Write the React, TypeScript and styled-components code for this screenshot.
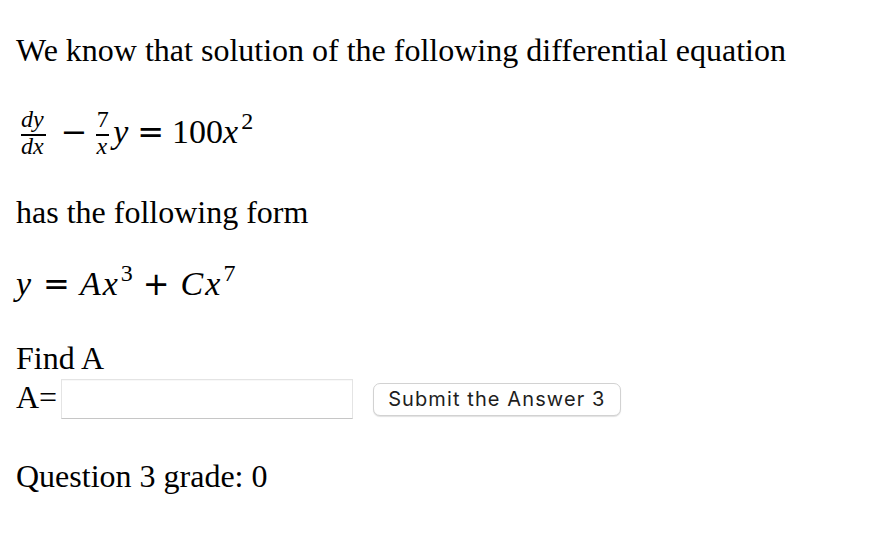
import React from 'react';
import styled, { createGlobalStyle } from 'styled-components';

const GlobalStyle = createGlobalStyle`
  html, body {
    margin: 0;
    background: #ffffff;
  }
  body {
    font-family: "Liberation Serif", "Times New Roman", serif;
    color: #000000;
  }
`;

const Page = styled.div`
  padding: 32px 16px 0;
`;

const Para = styled.p<{ $top: number }>`
  margin: ${props => props.$top}px 0 0;
  font-size: 32px;
  line-height: 36px;
`;

const MathRow = styled.div<{ $top: number }>`
  margin-top: ${props => props.$top}px;
  height: 80px;
  font-family: "Liberation Serif", "Times New Roman", serif;
  font-size: 34px;
  line-height: 80px;
  white-space: nowrap;
`;

const Var = styled.span`
  font-style: italic;
  margin-right: 2px;
`;

const Num = styled.span`
  font-style: normal;
`;

const Op = styled.span<{ $l: number; $r: number }>`
  font-family: "DejaVu Sans", sans-serif;
  font-size: 32px;
  line-height: 1;
  margin: 0 ${props => props.$r}px 0 ${props => props.$l}px;
`;

const Sup = styled.span`
  font-size: 24px;
  line-height: 0;
  vertical-align: 14px;
  margin-left: 1px;
`;

const Frac = styled.span<{ $pad: number; $left?: number; $right?: number }>`
  display: inline-flex;
  flex-direction: column;
  align-items: center;
  vertical-align: 16px;
  font-size: 24px;
  padding: 0 ${props => props.$pad}px;
  margin: 0 ${props => props.$right ?? 0}px 0 ${props => props.$left ?? 0}px;
`;

const FracPart = styled.span`
  line-height: 20px;
  height: 20px;
  white-space: nowrap;
`;

const FracBar = styled.span`
  align-self: stretch;
  height: 2px;
  margin: 5px 0 0;
  background: #000000;
`;

const AnswerRow = styled.div`
  display: flex;
  align-items: center;
  margin-top: 3px;
`;

const Label = styled.span`
  align-self: flex-start;
  font-size: 32px;
  line-height: 36px;
`;

const AnswerInput = styled.input`
  box-sizing: border-box;
  width: 292px;
  height: 40px;
  margin: 0 0 0 4px;
  padding: 0 8px;
  border: 1px solid #e4e4e4;
  border-bottom-color: #c6c6c6;
  border-radius: 0;
  background: #ffffff;
  box-shadow: inset 0 1px 1px rgba(0, 0, 0, 0.03);
  font-size: 20px;
  outline: none;
`;

const SubmitButton = styled.button`
  box-sizing: border-box;
  height: 33px;
  margin-left: 20px;
  padding: 0 14px;
  border: 1px solid #d2d2d2;
  border-radius: 7px;
  background: #ffffff;
  box-shadow: 0 1px 1px rgba(0, 0, 0, 0.12);
  color: #1e1e1e;
  font-family: Inter, "Liberation Sans", sans-serif;
  font-size: 20px;
  letter-spacing: 1.1px;
  white-space: nowrap;
  cursor: pointer;
`;

const App: React.FC = () => {
  return (
    <Page>
      <GlobalStyle />
      <Para $top={0}>We know that solution of the following differential equation</Para>

      <MathRow $top={24}>
        <Frac $pad={3} $left={2}>
          <FracPart><Var>dy</Var></FracPart>
          <FracBar />
          <FracPart><Var>dx</Var></FracPart>
        </Frac>
        <Op $l={12} $r={9}>−</Op>
        <Frac $pad={0} $right={4}>
          <FracPart><Num>7</Num></FracPart>
          <FracBar />
          <FracPart><Var>x</Var></FracPart>
        </Frac>
        <Var>y</Var>
        <Op $l={7} $r={8}>=</Op>
        <Num>100</Num>
        <Var>x</Var>
        <Sup>2</Sup>
      </MathRow>

      <Para $top={22}>has the following form</Para>

      <MathRow $top={14}>
        <Var>y</Var>
        <Op $l={10} $r={10}>=</Op>
        <Var>A</Var>
        <Var>x</Var>
        <Sup>3</Sup>
        <Op $l={10} $r={11}>+</Op>
        <Var>C</Var>
        <Var>x</Var>
        <Sup>7</Sup>
      </MathRow>

      <Para $top={16}>Find A</Para>
      <AnswerRow>
        <Label>A=</Label>
        <AnswerInput type="text" />
        <SubmitButton type="button">Submit the Answer 3</SubmitButton>
      </AnswerRow>

      <Para $top={39}>Question 3 grade: 0</Para>
    </Page>
  );
};

export default App;
